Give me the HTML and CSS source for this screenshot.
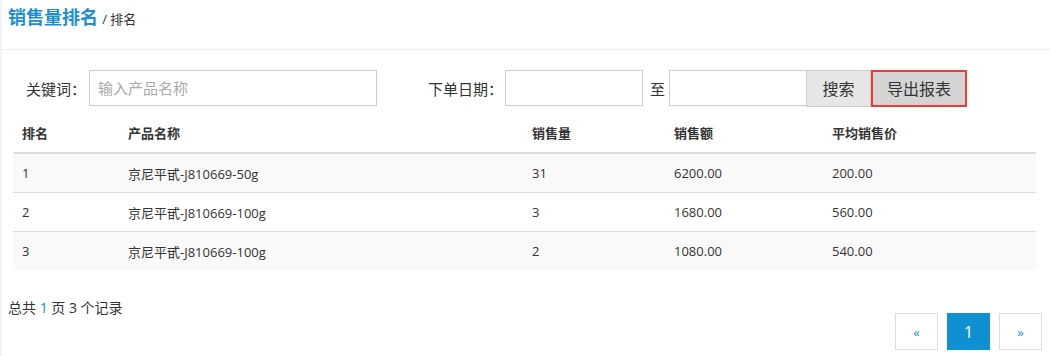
FILE: index.html
```html
<!DOCTYPE html>
<html lang="zh-CN">
<head>
    <meta charset="UTF-8">
    <meta name="viewport" content="width=device-width, initial-scale=1.0">
    <title>销售量排名</title>
    <link rel="stylesheet" href="styles.css">
</head>
<body>

    <div class="page-header">
        <span class="page-title">销售量排名</span>
        <span class="crumb">/ 排名</span>
    </div>

    <div class="filter-bar">
        <label class="filter-label first">关键词：</label>
        <input class="text-input keyword" type="text" placeholder="输入产品名称">
        <label class="filter-label date">下单日期：</label>
        <input class="text-input date-input" type="text">
        <span class="to">至</span>
        <input class="text-input date-input" type="text">
        <button class="btn search-btn">搜索</button>
        <button class="btn export-btn">导出报表</button>
    </div>

    <div class="table-wrap">
        <table class="rank-table">
            <thead>
                <tr>
                    <th class="col-rank">排名</th>
                    <th class="col-name">产品名称</th>
                    <th class="col-qty">销售量</th>
                    <th class="col-amt">销售额</th>
                    <th>平均销售价</th>
                </tr>
            </thead>
            <tbody>
                <tr><td>1</td><td>京尼平甙-J810669-50g</td><td>31</td><td>6200.00</td><td>200.00</td></tr>
                <tr><td>2</td><td>京尼平甙-J810669-100g</td><td>3</td><td>1680.00</td><td>560.00</td></tr>
                <tr><td>3</td><td>京尼平甙-J810669-100g</td><td>2</td><td>1080.00</td><td>540.00</td></tr>
            </tbody>
        </table>
    </div>

    <div class="footer">
        <div class="summary">总共 <span class="hl">1</span> 页 3 个记录</div>
        <ul class="pager">
            <li class="pg">&laquo;</li>
            <li class="pg active">1</li>
            <li class="pg">&raquo;</li>
        </ul>
    </div>

</body>
</html>
```

FILE: styles.css
```css
body {
    margin: 0;
    font-family: "Open Sans", "Noto Sans CJK SC", sans-serif;
    color: #333;
    background: #fff;
    border-left: 2px solid #f3f3f3;
    height: 356px;
    box-sizing: border-box;
}
.page-header {
    height: 50px;
    padding: 3px 0 0 6px;
    box-sizing: border-box;
    border-bottom: 1px solid #eee;
}
.page-title {
    font-size: 18px;
    font-weight: bold;
    color: #1a8fd5;
}
.crumb {
    font-size: 13px;
    color: #333;
}
.filter-bar {
    display: flex;
    align-items: center;
    margin-top: 20px;
    height: 36px;
}
.filter-label {
    font-size: 15px;
    color: #333;
}
.filter-label.first {
    margin-left: 24px;
    margin-right: 3px;
}
.filter-label.date {
    margin-left: 51px;
    margin-right: 2px;
}
.text-input {
    height: 36px;
    box-sizing: border-box;
    border: 1px solid #ccc;
    padding: 0 8px;
    font-family: inherit;
    font-size: 15px;
    outline: none;
}
.text-input::placeholder {
    color: #aaa;
}
.keyword { width: 288px; }
.date-input { width: 138px; }
.to {
    font-size: 15px;
    margin: 0 4px 0 7px;
}
.btn {
    height: 37px;
    box-sizing: border-box;
    font-family: inherit;
    font-size: 16px;
    color: #333;
    cursor: pointer;
    padding: 0;
}
.search-btn {
    width: 65px;
    background: #e6e6e6;
    border: 1px solid #ccc;
    margin-left: -1px;
}
.export-btn {
    width: 96px;
    background: #d4d4d4;
    border: 2px solid #f03a3a;
    margin-left: 0;
}
.table-wrap {
    margin: 7px 14px 0 11px;
}
.rank-table {
    width: 100%;
    border-collapse: collapse;
    font-size: 13px;
}
.rank-table th,
.rank-table td {
    text-align: left;
    padding: 0 9px;
    height: 38px;
}
.rank-table th {
    font-weight: bold;
    border-bottom: 2px solid #ddd;
    height: 39px;
}
.rank-table td {
    border-top: 1px solid #ddd;
}
.rank-table tbody tr:first-child td {
    border-top: none;
}
.rank-table tbody tr:nth-child(odd) {
    background: #f9f9f9;
}
.col-rank { width: 88px; }
.col-name { width: 386px; }
.col-qty { width: 124px; }
.col-amt { width: 140px; }
.footer {
    display: flex;
    justify-content: space-between;
    padding: 0 8px 0 6px;
}
.summary {
    font-size: 14px;
    margin-top: 27px;
}
.hl { color: #1a8fd5; }
.pager {
    list-style: none;
    display: flex;
    gap: 9px;
    margin: 43px 0 0;
    padding: 0;
}
.pg {
    width: 43px;
    height: 37px;
    box-sizing: border-box;
    border: 1px solid #ddd;
    display: flex;
    align-items: center;
    justify-content: center;
    color: #1a8fd5;
    font-size: 13px;
}
.pg.active {
    background: #1190d1;
    border-color: #1190d1;
    color: #fff;
    font-size: 16px;
}
```
